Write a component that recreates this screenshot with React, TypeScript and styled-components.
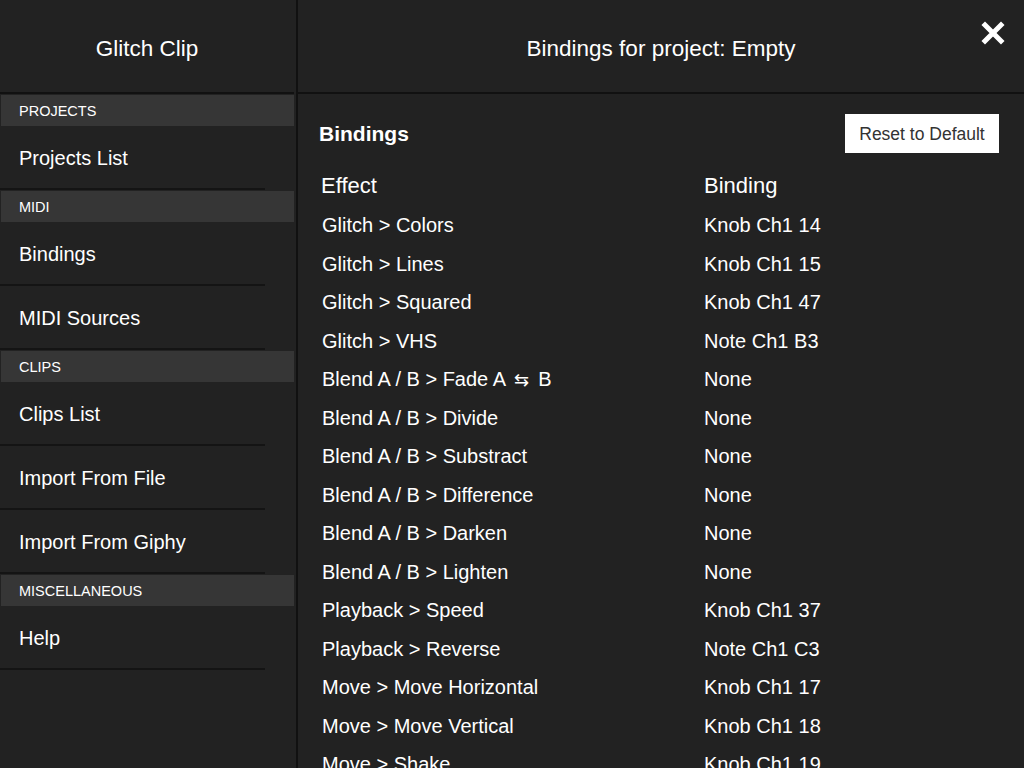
import React from "react";
import styled, { createGlobalStyle } from "styled-components";

const Global = createGlobalStyle`
  html, body { margin: 0; padding: 0; background: #222222; }
  body { font-family: "Liberation Sans", Arial, Helvetica, sans-serif; color: #fff; }
  * { box-sizing: border-box; }
`;

const Shell = styled.div`
  display: flex;
  width: 1024px;
  height: 768px;
  overflow: hidden;
  background: #222222;
`;

const Sidebar = styled.nav`
  width: 298px;
  flex: none;
  display: flex;
  flex-direction: column;
  border-right: 2px solid #111111;
  padding-right: 2px;
`;

const HeaderBar = styled.header`
  position: relative;
  height: 94px;
  flex: none;
  display: flex;
  align-items: center;
  justify-content: center;
  padding-top: 5px;
  border-bottom: 2px solid #111111;
  font-size: 22.5px;
  color: #fff;
`;

const SectionTitle = styled.div`
  height: 31px;
  margin-top: 1px;
  margin-left: 1px;
  flex: none;
  display: flex;
  align-items: center;
  padding-left: 18px;
  background: #363636;
  font-size: 14.5px;
  text-transform: uppercase;
`;

const NavItem = styled.div`
  height: 64px;
  flex: none;
  display: flex;
  align-items: center;
  padding-left: 19px;
  padding-top: 1px;
  font-size: 20px;
  position: relative;
  &::after {
    content: "";
    position: absolute;
    left: 0;
    bottom: 0;
    width: 265px;
    height: 2px;
    background: #141414;
  }
`;

const Main = styled.main`
  flex: 1;
  display: flex;
  flex-direction: column;
  min-width: 0;
`;

const CloseButton = styled.button`
  position: absolute;
  top: 20px;
  right: 18px;
  width: 26px;
  height: 26px;
  padding: 0;
  border: none;
  background: transparent;
  display: flex;
  align-items: center;
  justify-content: center;
`;

const Content = styled.section`
  padding: 20px 25px 0 21px;
  display: flex;
  flex-direction: column;
`;

const TitleRow = styled.div`
  display: flex;
  align-items: center;
  justify-content: space-between;
  height: 39px;
`;

const SectionHeading = styled.h2`
  margin: 0;
  font-size: 21px;
  font-weight: bold;
`;

const ResetButton = styled.button`
  width: 154px;
  height: 39px;
  background: #ffffff;
  border: none;
  color: #333333;
  font-family: "Liberation Sans", Arial, sans-serif;
  font-size: 17.5px;
  padding: 2px 0 0;
`;

const Table = styled.div`
  display: grid;
  grid-template-columns: 383px 1fr;
  margin-top: 14px;
`;

const HeadCell = styled.div`
  height: 38px;
  display: flex;
  align-items: center;
  font-size: 22px;
  padding-left: 2px;
`;

const Cell = styled.div`
  height: 38.5px;
  display: flex;
  align-items: center;
  font-size: 20px;
  padding-left: 3px;
  padding-top: 3px;
  white-space: nowrap;
`;

const BindingCell = styled(Cell)`
  padding-left: 2px;
`;

const Swap = styled.span`
  font-family: "DejaVu Sans", sans-serif;
  font-size: 18px;
  margin: 0 9px 0 8px;
`;

const rows: [React.ReactNode, string][] = [
  ["Glitch > Colors", "Knob Ch1 14"],
  ["Glitch > Lines", "Knob Ch1 15"],
  ["Glitch > Squared", "Knob Ch1 47"],
  ["Glitch > VHS", "Note Ch1 B3"],
  [<>Blend A / B &gt; Fade A<Swap>⇆</Swap>B</>, "None"],
  ["Blend A / B > Divide", "None"],
  ["Blend A / B > Substract", "None"],
  ["Blend A / B > Difference", "None"],
  ["Blend A / B > Darken", "None"],
  ["Blend A / B > Lighten", "None"],
  ["Playback > Speed", "Knob Ch1 37"],
  ["Playback > Reverse", "Note Ch1 C3"],
  ["Move > Move Horizontal", "Knob Ch1 17"],
  ["Move > Move Vertical", "Knob Ch1 18"],
  ["Move > Shake", "Knob Ch1 19"],
];

const nav: { section: string; items: string[] }[] = [
  { section: "Projects", items: ["Projects List"] },
  { section: "MIDI", items: ["Bindings", "MIDI Sources"] },
  { section: "Clips", items: ["Clips List", "Import From File", "Import From Giphy"] },
  { section: "Miscellaneous", items: ["Help"] },
];

export default function App() {
  return (
    <Shell>
      <Global />
      <Sidebar>
        <HeaderBar>Glitch Clip</HeaderBar>
        {nav.map((g) => (
          <React.Fragment key={g.section}>
            <SectionTitle>{g.section}</SectionTitle>
            {g.items.map((it) => (
              <NavItem key={it}>{it}</NavItem>
            ))}
          </React.Fragment>
        ))}
      </Sidebar>
      <Main>
        <HeaderBar>
          Bindings for project: Empty
          <CloseButton aria-label="Close">
            <svg width="26" height="26" viewBox="0 0 26 26">
              <path d="M5 5 L21 21 M21 5 L5 21" stroke="#fff" strokeWidth="5" strokeLinecap="square" />
            </svg>
          </CloseButton>
        </HeaderBar>
        <Content>
          <TitleRow>
            <SectionHeading>Bindings</SectionHeading>
            <ResetButton>Reset to Default</ResetButton>
          </TitleRow>
          <Table>
            <HeadCell>Effect</HeadCell>
            <HeadCell>Binding</HeadCell>
            {rows.map(([e, b], i) => (
              <React.Fragment key={i}>
                <Cell>{e}</Cell>
                <BindingCell>{b}</BindingCell>
              </React.Fragment>
            ))}
          </Table>
        </Content>
      </Main>
    </Shell>
  );
}
